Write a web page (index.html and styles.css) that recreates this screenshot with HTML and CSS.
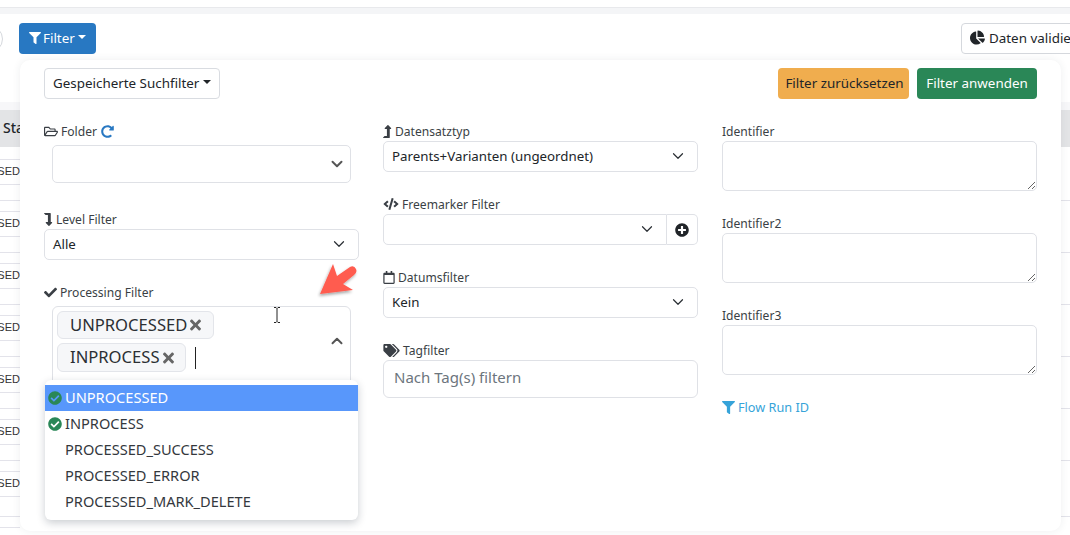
FILE: index.html
```html
<!DOCTYPE html>
<html lang="de">
<head>
<meta charset="utf-8">
<title>Filter</title>
<link rel="stylesheet" href="styles.css">
</head>
<body>
<svg class="defs" aria-hidden="true">
  <symbol id="i-filter" viewBox="0 0 512 512"><path d="M487.976 0H24.028C2.71 0-8.047 25.866 7.058 40.971L192 225.941V432c0 7.831 3.821 15.17 10.237 19.662l80 55.98C298.02 518.69 320 507.493 320 487.98V225.941l184.947-184.97C520.021 25.896 509.338 0 487.976 0z"/></symbol>
  <symbol id="i-check-circle" viewBox="0 0 512 512"><path d="M504 256c0 136.967-111.033 248-248 248S8 392.967 8 256 119.033 8 256 8s248 111.033 248 248zM227.314 387.314l184-184c6.248-6.248 6.248-16.379 0-22.627l-22.627-22.627c-6.248-6.249-16.379-6.249-22.628 0L216 308.118l-70.059-70.059c-6.248-6.248-16.379-6.248-22.628 0l-22.627 22.627c-6.248 6.248-6.248 16.379 0 22.627l104 104c6.249 6.249 16.379 6.249 22.628.001z"/></symbol>
  <symbol id="i-times" viewBox="0 0 352 512"><path d="M242.72 256l100.07-100.07c12.28-12.28 12.28-32.19 0-44.48l-22.24-22.24c-12.28-12.28-32.19-12.28-44.48 0L176 189.28 75.93 89.21c-12.28-12.28-32.19-12.28-44.48 0L9.21 111.45c-12.28 12.28-12.28 32.19 0 44.48L109.28 256 9.21 356.07c-12.28 12.28-12.28 32.19 0 44.48l22.24 22.24c12.28 12.28 32.2 12.28 44.48 0L176 322.72l100.07 100.07c12.28 12.28 32.2 12.28 44.48 0l22.24-22.24c12.28-12.28 12.28-32.19 0-44.48L242.72 256z"/></symbol>
  <symbol id="i-chev" viewBox="0 0 16 16"><path d="M2 5l6 6 6-6" fill="none" stroke="currentColor" stroke-linecap="round" stroke-linejoin="round"/></symbol>
</svg>

<header class="topbar"></header>
<main class="card">
  <div class="toolbar">
    <button class="btn-circle" type="button"></button>
    <button class="btn btn-filter" type="button"><svg class="ico ico-12"><use href="#i-filter"/></svg>Filter<span class="caret"></span></button>
    <button class="btn btn-validate" type="button"><svg class="ico ico-15" viewBox="0 0 544 512"><path d="M527.79 288H290.5l158.03 158.03c6.04 6.04 15.98 6.53 22.19.68 38.7-36.46 65.32-85.61 73.13-140.86 1.34-9.46-6.51-17.85-16.06-17.85zm-15.83-64.8C503.72 103.74 408.26 8.28 288.8.04 279.68-.59 272 7.1 272 16.24V240h223.77c9.14 0 16.82-7.68 16.19-16.8zM224 288V50.71c0-9.55-8.39-17.4-17.84-16.06C86.99 51.49-4.1 155.6.14 280.37 4.5 408.51 114.83 513.59 243.03 511.98c50.4-.63 96.97-16.87 135.26-44.03 7.9-5.6 8.42-17.23 1.57-24.08L224 288z"/></svg>Daten validieren</button>
  </div>
  <div class="table">
    <div class="thead"><span class="th">Status</span></div>
    <div class="row"><div class="cell">UNPROCESSED</div></div>
    <div class="row"><div class="cell">UNPROCESSED</div></div>
    <div class="row"><div class="cell">UNPROCESSED</div></div>
    <div class="row"><div class="cell">UNPROCESSED</div></div>
    <div class="row"><div class="cell">UNPROCESSED</div></div>
    <div class="row"><div class="cell">UNPROCESSED</div></div>
    <div class="row row-last"><div class="cell">UNPROCESSED</div></div>
    <div class="row-end"></div>
  </div>
</main>

<section class="panel">
  <div class="panel-head">
    <button class="btn btn-plain" type="button">Gespeicherte Suchfilter<span class="caret"></span></button>
    <div class="actions">
      <button class="btn btn-warn" type="button">Filter zurücksetzen</button>
      <button class="btn btn-go" type="button">Filter anwenden</button>
    </div>
  </div>
  <div class="grid">
    <div class="col col-left">
      <div class="group">
        <label class="lbl"><svg class="ico ico-folder" viewBox="0 0 576 512"><path d="M527.9 224H480v-48c0-26.5-21.5-48-48-48H272l-64-64H48C21.5 64 0 85.5 0 112v288c0 26.5 21.5 48 48 48h400c16.5 0 31.9-8.5 40.7-22.6l79.9-128c20-31.9-3-73.4-40.7-73.4zM48 118c0-3.3 2.7-6 6-6h134.1l64 64H426c3.3 0 6 2.7 6 6v42H152c-16.8 0-32.4 8.8-41.1 23.2L48 351.4zm400 282H72l77.2-128H528z"/></svg>Folder<svg class="ico ico-13 blue" viewBox="0 0 512 512"><path d="M256.455 8c66.269.119 126.437 26.233 170.859 68.685l35.715-35.715C478.149 25.851 504 36.559 504 57.941V192c0 13.255-10.745 24-24 24H345.941c-21.382 0-32.09-25.851-16.971-40.971l41.75-41.75c-30.864-28.899-70.801-44.907-113.23-45.273-92.398-.798-170.283 73.977-169.484 169.442C88.764 348.009 162.184 424 256 424c41.127 0 79.997-14.678 110.629-41.556 4.743-4.161 11.906-3.908 16.368.553l39.662 39.662c4.872 4.872 4.631 12.815-.482 17.433C378.202 479.813 319.926 504 256 504 119.034 504 8.001 392.967 8 256.002 7.999 119.193 119.646 7.755 256.455 8z"/></svg></label>
        <div class="ctl ctl-tall"><span></span><svg class="chev chev-bold"><use href="#i-chev"/></svg></div>
      </div>
      <div class="group">
        <label class="lbl"><svg class="ico ico-lvl" viewBox="0 0 350 512"><path d="M313.553 392.331L209.587 504.334c-9.485 10.214-25.676 10.229-35.174 0L70.438 392.331C56.23 377.031 67.066 352 88.024 352H152V80H68.024a11.996 11.996 0 0 1-8.485-3.515l-56-56C-4.021 12.926 1.333 0 12.024 0H240c13.255 0 24 10.745 24 24v328h32c20.896 0 31.829 24.947 17.553 40.331z"/></svg>Level Filter</label>
        <div class="ctl"><span>Alle</span><svg class="chev"><use href="#i-chev"/></svg></div>
      </div>
      <div class="group group-multi">
        <label class="lbl"><svg class="ico ico-13" viewBox="0 0 512 512"><path d="M173.898 439.404l-166.4-166.4c-9.997-9.997-9.997-26.206 0-36.204l36.203-36.204c9.997-9.998 26.207-9.998 36.204 0L192 312.69 432.095 72.596c9.997-9.997 26.207-9.997 36.204 0l36.203 36.204c9.997 9.997 9.997 26.206 0 36.204l-294.4 294.401c-9.998 9.997-26.207 9.997-36.204-.001z"/></svg>Processing Filter</label>
        <div class="multi">
          <div class="tags">
            <span class="tag">UNPROCESSED<svg class="tag-x"><use href="#i-times"/></svg></span>
            <span class="tag-line"><span class="tag">INPROCESS<svg class="tag-x"><use href="#i-times"/></svg></span><span class="text-caret"></span></span>
          </div>
          <svg class="chev chev-bold chev-up"><use href="#i-chev"/></svg>
        </div>
        <ul class="menu">
          <li class="opt opt-active"><svg class="ico opt-check"><use href="#i-check-circle"/></svg>UNPROCESSED</li>
          <li class="opt"><svg class="ico opt-check"><use href="#i-check-circle"/></svg>INPROCESS</li>
          <li class="opt opt-plain">PROCESSED_SUCCESS</li>
          <li class="opt opt-plain">PROCESSED_ERROR</li>
          <li class="opt opt-plain">PROCESSED_MARK_DELETE</li>
        </ul>
      </div>
    </div>
    <div class="col">
      <div class="group">
        <label class="lbl"><svg class="ico ico-lvl" viewBox="0 0 350 512"><path d="M313.553 119.669L209.587 7.666c-9.485-10.214-25.676-10.229-35.174 0L70.438 119.669C56.23 134.969 67.066 160 88.024 160H152v272H68.024a11.996 11.996 0 0 0-8.485 3.515l-56 56C-4.021 499.074 1.333 512 12.024 512H240c13.255 0 24-10.745 24-24V160h32c20.896 0 31.829-24.947 17.553-40.331z"/></svg>Datensatztyp</label>
        <div class="ctl"><span>Parents+Varianten (ungeordnet)</span><svg class="chev"><use href="#i-chev"/></svg></div>
      </div>
      <div class="group">
        <label class="lbl"><svg class="ico ico-code" viewBox="0 0 640 512"><path d="M278.9 511.5l-61-17.7c-6.4-1.8-10-8.5-8.2-14.9L346.2 8.7c1.8-6.4 8.5-10 14.9-8.2l61 17.7c6.4 1.8 10 8.5 8.2 14.9L293.8 503.3c-1.9 6.4-8.5 10.1-14.9 8.2zm-114-112.2l43.5-46.4c4.6-4.9 4.3-12.7-.8-17.2L117 256l90.6-79.7c5.1-4.5 5.5-12.3.8-17.2l-43.5-46.4c-4.5-4.8-12.1-5.1-17-.5L3.8 247.2c-5.1 4.7-5.1 12.8 0 17.5l144.1 135.1c4.9 4.6 12.5 4.4 17-.5zm327.2.6l144.1-135.1c5.1-4.7 5.1-12.8 0-17.5L492.1 112.1c-4.8-4.5-12.4-4.3-17 .5L431.6 159c-4.6 4.9-4.3 12.7.8 17.2L523 256l-90.6 79.7c-5.1 4.5-5.5 12.3-.8 17.2l43.5 46.4c4.5 4.9 12.1 5.1 17 .6z"/></svg>Freemarker Filter</label>
        <div class="ctl-group">
          <div class="ctl ctl-joined"><span></span><svg class="chev"><use href="#i-chev"/></svg></div>
          <button class="addon" type="button"><svg class="ico ico-14" viewBox="0 0 512 512"><path d="M256 8C119 8 8 119 8 256s111 248 248 248 248-111 248-248S393 8 256 8zm144 276c0 6.6-5.4 12-12 12h-92v92c0 6.6-5.4 12-12 12h-56c-6.6 0-12-5.4-12-12v-92h-92c-6.6 0-12-5.4-12-12v-56c0-6.6 5.4-12 12-12h92v-92c0-6.6 5.4-12 12-12h56c6.6 0 12 5.4 12 12v92h92c6.6 0 12 5.4 12 12v56z"/></svg></button>
        </div>
      </div>
      <div class="group">
        <label class="lbl"><svg class="ico ico-cal" viewBox="0 0 448 512"><path d="M400 64h-48V12c0-6.6-5.4-12-12-12h-40c-6.6 0-12 5.4-12 12v52H160V12c0-6.6-5.4-12-12-12h-40c-6.6 0-12 5.4-12 12v52H48C21.5 64 0 85.5 0 112v352c0 26.5 21.5 48 48 48h352c26.5 0 48-21.5 48-48V112c0-26.5-21.5-48-48-48zm-6 400H54c-3.3 0-6-2.7-6-6V160h352v298c0 3.3-2.7 6-6 6z"/></svg>Datumsfilter</label>
        <div class="ctl"><span>Kein</span><svg class="chev"><use href="#i-chev"/></svg></div>
      </div>
      <div class="group">
        <label class="lbl"><svg class="ico ico-tags" viewBox="0 0 640 512"><path d="M497.941 225.941L286.059 14.059A48 48 0 0 0 252.118 0H48C21.49 0 0 21.49 0 48v204.118a48 48 0 0 0 14.059 33.941l211.882 211.882c18.744 18.745 49.136 18.746 67.882 0l204.118-204.118c18.745-18.745 18.745-49.137 0-67.882zM112 160c-26.51 0-48-21.49-48-48s21.49-48 48-48 48 21.49 48 48-21.49 48-48 48zm513.941 133.823L421.823 497.941c-18.745 18.745-49.137 18.745-67.882 0l-.36-.36L527.64 323.522c16.999-16.999 26.36-39.6 26.36-63.64s-9.362-46.641-26.36-63.64L331.397 0h48.721a48 48 0 0 1 33.941 14.059l211.882 211.882c18.745 18.745 18.745 49.137 0 67.882z"/></svg>Tagfilter</label>
        <input class="tag-input" type="text" placeholder="Nach Tag(s) filtern">
      </div>
    </div>
    <div class="col">
      <div class="group">
        <label class="lbl">Identifier</label>
        <textarea class="area"></textarea>
      </div>
      <div class="group">
        <label class="lbl">Identifier2</label>
        <textarea class="area"></textarea>
      </div>
      <div class="group">
        <label class="lbl">Identifier3</label>
        <textarea class="area"></textarea>
      </div>
      <a class="flow-link" href="#"><svg class="ico ico-13"><use href="#i-filter"/></svg>Flow Run ID</a>
    </div>
  </div>
</section>

<svg class="pointer-arrow" viewBox="0 0 50 40" aria-hidden="true">
  <defs><filter id="arrow-shadow" x="-20%" y="-20%" width="140%" height="150%"><feDropShadow dx="-1" dy="2" stdDeviation="1.5" flood-color="#000" flood-opacity=".35"/></filter></defs>
  <path d="M3 32 L16 2 L20 14 L33 5 Q37 3 39 7 Q40.500 10 37 13 L26 22 L36 28 Z" fill="#ff5b4f" filter="url(#arrow-shadow)"/>
</svg>
<svg class="ibeam" viewBox="0 0 8 16" aria-hidden="true"><path d="M1 .5h2l1 1 1-1h2M4 1.500v13M1 15.500h2l1-1 1 1h2" fill="none" stroke="#222" stroke-width="1"/></svg>
</body>
</html>
```
FILE: styles.css
```css
* { box-sizing: border-box; }
html, body { margin: 0; height: 535px; overflow: hidden; }
body {
  background: #f4f5f7;
  font-family: "Noto Sans", "Open Sans", sans-serif;
  font-size: 13.3px;
  color: #212529;
  position: relative;
}
.defs { display: none; }
.ico { width: 13px; height: 13px; fill: currentColor; flex: none; display: inline-block; }
.ico-12 { width: 12px; height: 12px; }
.ico-13 { width: 13px; height: 13px; }
.ico-14 { width: 14px; height: 14px; }
.ico-15 { width: 15px; height: 15px; }
.ico-lvl { width: 9px; height: 13px; }
.ico-code { width: 16px; height: 12px; }
.ico-tags { width: 17px; height: 13px; }
.ico-folder { width: 14px; height: 13px; }
.ico-cal { width: 12px; height: 13px; }
.blue { color: #2878c2; margin-left: 1px; }

.topbar { height: 8px; background: #fff; border-bottom: 1px solid #e8e9ec; }
.card { margin-top: 6px; background: #fff; height: 521px; overflow: hidden; }
.toolbar { display: flex; align-items: center; height: 88px; padding-bottom: 39px; }
.btn-circle { width: 28px; height: 28px; margin: 0 16px 0 -25px; border-radius: 50%; border: 1px solid #d5d8dd; background: #fff; flex: none; padding: 0; }

.btn {
  font-family: inherit;
  font-size: 13.4px;
  display: inline-flex;
  align-items: center;
  border-radius: 4px;
  border: 1px solid transparent;
  white-space: nowrap;
  flex: none;
  padding: 0 8px 2px;
  height: 31px;
  color: #212529;
}
.caret { width: 0; height: 0; margin-left: 4px; border-left: 4px solid transparent; border-right: 4px solid transparent; border-top: 4px solid currentColor; position: relative; top: -1px; }
.btn-filter { background: #2878c2; color: #fff; gap: 2px; padding: 0 8px 2px 9px; width: 77px; }
.btn-filter .caret { margin-left: 1px; }
.btn-validate { margin-left: 865px; background: #fff; border-color: #d5d8dd; gap: 4px; }
.btn-plain { background: #fff; border-color: #d9dce1; width: 176px; }
.btn-warn { background: #f0ad4e; width: 131px; justify-content: center; padding: 0 0 2px 2px; }
.btn-go { background: #2a8757; color: #fff; width: 120px; justify-content: center; padding: 0 0 2px; }

.table { height: 433px; }
.thead { height: 47px; border-top: 8px solid #f7f7f9; background: #e3e4e6; border-bottom: 2px solid #fff; }
.th { display: block; padding: 8px 0 0 3px; font-size: 14px; font-weight: 500; white-space: nowrap; }
.row { display: flow-root; height: 52px; border-bottom: 1px solid #e3e3ea; }
.row-last { height: 56px; }
.row-end { width: 20px; margin-top: 10px; border-top: 1px solid #e3e3ea; }
.cell { margin-top: 10px; width: 20px; height: 26px; border-top: 1px solid #e3e3ea; border-bottom: 1px solid #e3e3ea; font: 11px/22px "Liberation Sans", sans-serif; color: #333; display: flex; justify-content: flex-end; overflow: hidden; white-space: nowrap; }

.panel {
  position: absolute;
  left: 20px;
  top: 60px;
  width: 1041px;
  height: 471px;
  background: #fff;
  border-radius: 10px;
  box-shadow: 0 0 8px rgba(40, 50, 70, .08);
  padding: 8px 24px;
}
.panel-head { display: flex; justify-content: space-between; height: 53px; }
.actions { display: flex; gap: 8px; }
.grid { display: grid; grid-template-columns: repeat(3, 315px); column-gap: 24px; }
.col { display: flex; flex-direction: column; position: relative; }
.group { display: flex; flex-direction: column; margin-bottom: 22px; }
.lbl { display: flex; align-items: center; gap: 3px; height: 20px; font-size: 12.1px; color: #3a3f45; }
.ctl, .ctl-group, .tag-input { width: 100%; }
.ctl {
  height: 31px;
  border: 1px solid #dfe1e6;
  border-radius: 5px;
  display: flex;
  align-items: center;
  justify-content: space-between;
  padding: 0 13px 2px 8px;
  background: #fff;
}
.ctl-tall { width: 299px; height: 38px; margin: 4px 8px 4px; padding: 0 7px 0 8px; }
.chev { width: 12px; height: 12px; color: #2b3035; flex: none; stroke-width: 1.6; }
.chev-bold { color: #555; stroke-width: 2.6; }
.chev-up { transform: scaleY(-1); }
.ctl-group { display: flex; height: 31px; }
.ctl-joined { flex: 1; border-radius: 5px 0 0 5px; }
.addon { width: 31px; border: 1px solid #dfe1e6; border-left: 0; border-radius: 0 5px 5px 0; background: #fff; padding: 0; display: flex; align-items: center; justify-content: center; color: #212529; }
.tag-input { height: 38px; border: 1px solid #dfe1e6; border-radius: 6px; padding: 0 10px 5px; font: 15px "Noto Sans", sans-serif; color: #212529; outline: none; }
.tag-input::placeholder { color: #6c757d; opacity: 1; }
.area { display: block; width: 100%; height: 50px; border: 1px solid #dfe1e6; border-radius: 5px; resize: vertical; outline: none; background: #fff; }

.group-multi { margin: 0; }
.multi { width: 299px; height: 80px; margin: 4px 8px 0; border: 1px solid #dfe1e6; border-radius: 6px; display: flex; justify-content: space-between; padding: 4px 7px 0 4px; }
.multi .chev { margin-top: 24px; }
.tags { display: flex; flex-direction: column; gap: 4px; align-items: flex-start; }
.tag-line { display: flex; align-items: center; gap: 9px; }
.tag { height: 28px; display: inline-flex; align-items: center; gap: 3px; padding: 0 12px 2px 12px; background: #f6f7f9; border: 1px solid #e3e5ea; border-radius: 6px; font-size: 16.6px; color: #2b2f33; }
.tag-x { width: 11px; height: 16px; fill: #666; position: relative; top: 1px; }
.tag-line .tag { height: 29px; padding-right: 11px; }
.text-caret { width: 1px; height: 22px; background: #222; }

.menu {
  position: absolute;
  left: 1px;
  top: 259px;
  width: 313px;
  height: 140px;
  margin: 0;
  padding: 5px 0 0;
  list-style: none;
  background: #fff;
  border-radius: 6px;
  box-shadow: 0 3px 8px rgba(20, 30, 50, .22);
}
.opt { height: 26px; display: flex; align-items: center; gap: 3px; padding: 0 0 3px 3px; font-size: 14.6px; color: #34383d; white-space: nowrap; }
.opt-plain { padding-left: 20px; }
.opt-active { background: #5897fb; color: #fff; }
.opt-check { width: 14px; height: 14px; fill: #2a8757; position: relative; top: 1px; }
.flow-link { display: flex; align-items: center; gap: 3px; height: 20px; font-size: 12.7px; color: #36a3d9; text-decoration: none; }

.pointer-arrow { position: absolute; left: 317px; top: 262px; width: 50px; height: 40px; }
.ibeam { position: absolute; left: 273px; top: 307px; width: 8px; height: 16px; }
```
